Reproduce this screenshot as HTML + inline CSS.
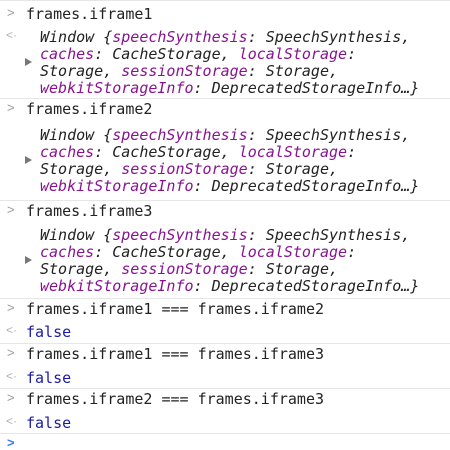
<!DOCTYPE html>
<html><head><style>
html,body{margin:0;padding:0;background:#fff;width:450px;height:450px;overflow:hidden;position:relative}
.t{position:absolute;font-family:"DejaVu Sans Mono","Liberation Mono",monospace;font-size:15px;line-height:17px;white-space:pre;color:#222}
.o{font-style:italic}
.k{color:#881391}
.f{color:#1a1aa6}
.p{position:absolute;font-family:"Liberation Sans",sans-serif;font-size:13px;color:#9a9a9a;left:7px}
.a{position:absolute;font-family:"Liberation Sans",sans-serif;font-size:12px;color:#b0b0b0;left:6px}
.s{position:absolute;left:0;width:450px;height:1px;background:#e6e6e6}
.tri{position:absolute;left:25px;width:0;height:0;border-top:4px solid transparent;border-bottom:4px solid transparent;border-left:7px solid #777}
</style></head><body>
<div class="s" style="top:0"></div>
<div class="p" style="top:5px">&gt;</div><div class="t" style="left:26px;top:6px">frames.iframe1</div>
<div class="a" style="top:28px">&lt;·</div>
<div class="tri" style="top:58px"></div>
<div class="t o" style="left:40px;top:29px">Window {<span class="k">speechSynthesis</span>: SpeechSynthesis,
<span class="k">caches</span>: CacheStorage, <span class="k">localStorage</span>:
Storage, <span class="k">sessionStorage</span>: Storage,
<span class="k">webkitStorageInfo</span>: DeprecatedStorageInfo…}</div>
<div class="s" style="top:98px"></div>
<div class="p" style="top:100px">&gt;</div><div class="t" style="left:26px;top:101px">frames.iframe2</div>
<div class="tri" style="top:156px"></div>
<div class="t o" style="left:40px;top:127px">Window {<span class="k">speechSynthesis</span>: SpeechSynthesis,
<span class="k">caches</span>: CacheStorage, <span class="k">localStorage</span>:
Storage, <span class="k">sessionStorage</span>: Storage,
<span class="k">webkitStorageInfo</span>: DeprecatedStorageInfo…}</div>
<div class="s" style="top:200px"></div>
<div class="p" style="top:202px">&gt;</div><div class="t" style="left:26px;top:203px">frames.iframe3</div>
<div class="tri" style="top:256px"></div>
<div class="t o" style="left:40px;top:227px">Window {<span class="k">speechSynthesis</span>: SpeechSynthesis,
<span class="k">caches</span>: CacheStorage, <span class="k">localStorage</span>:
Storage, <span class="k">sessionStorage</span>: Storage,
<span class="k">webkitStorageInfo</span>: DeprecatedStorageInfo…}</div>
<div class="s" style="top:298px"></div>
<div class="p" style="top:300px">&gt;</div><div class="t" style="left:26px;top:301px">frames.iframe1 === frames.iframe2</div>
<div class="a" style="top:323px">&lt;·</div><div class="t f" style="left:26px;top:324px">false</div>
<div class="s" style="top:343px"></div>
<div class="p" style="top:345px">&gt;</div><div class="t" style="left:26px;top:346px">frames.iframe1 === frames.iframe3</div>
<div class="a" style="top:369px">&lt;·</div><div class="t f" style="left:26px;top:370px">false</div>
<div class="s" style="top:388px"></div>
<div class="p" style="top:390px">&gt;</div><div class="t" style="left:26px;top:391px">frames.iframe2 === frames.iframe3</div>
<div class="a" style="top:414px">&lt;·</div><div class="t f" style="left:26px;top:415px">false</div>
<div class="s" style="top:433px"></div>
<div class="p" style="top:435px;color:#367cf1;font-weight:bold">&gt;</div>
</body></html>
